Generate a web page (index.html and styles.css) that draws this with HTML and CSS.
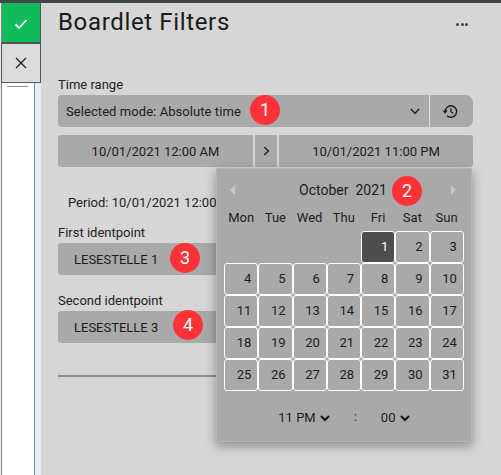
FILE: index.html
```html
<!DOCTYPE html>
<html>
<head>
  <title>Boardlet Filters</title>
  <link rel="stylesheet" href="styles.css">
</head>
<body>
  <div class="app">
    <div class="sidebar">
      <div class="sidebar-list">
        <div class="sidebar-line"></div>
      </div>
    </div>

    <div class="actions">
      <button class="action action-ok">
        <svg width="14" height="12" viewBox="0 0 14 12"><path d="M1.5 6.5 L5 10 L12.5 2" fill="none" stroke="#fff" stroke-width="1.8"/></svg>
      </button>
      <button class="action action-cancel">
        <svg width="12" height="12" viewBox="0 0 12 12"><path d="M1 1 L11 11 M11 1 L1 11" fill="none" stroke="#222" stroke-width="1.3"/></svg>
      </button>
    </div>

    <div class="panel">
      <div class="panel-head">
        <h1>Boardlet Filters</h1>
        <div class="more"><span></span><span></span><span></span></div>
      </div>

      <label class="field-label">Time range</label>
      <div class="mode-row">
        <div class="mode-select">
          <span class="mode-text">Selected mode: Absolute time</span>
          <svg width="10" height="7" viewBox="0 0 10 7"><path d="M0.8 1 L5 5.2 L9.2 1" fill="none" stroke="#222" stroke-width="1.4"/></svg>
        </div>
        <div class="mode-history">
          <svg width="16" height="15" viewBox="0 0 18 16"><path d="M3.6 8 A6.4 6.4 0 1 1 5.6 12.7" fill="none" stroke="#1c1c1c" stroke-width="1.6"/><path d="M0.6 7 L6.4 7 L3.5 10.4 Z" fill="#1c1c1c"/><path d="M10 4.4 L10 8.3 L12.8 10" fill="none" stroke="#1c1c1c" stroke-width="1.4"/></svg>
        </div>
      </div>

      <div class="date-row">
        <div class="date-btn date-from">10/01/2021 12:00 AM</div>
        <div class="date-next">
          <svg width="7" height="10" viewBox="0 0 7 10"><path d="M1.3 1 L5.3 5 L1.3 9" fill="none" stroke="#222" stroke-width="1.5"/></svg>
        </div>
        <div class="date-btn date-to">10/01/2021 11:00 PM</div>
      </div>

      <div class="period">Period: 10/01/2021 12:00 AM</div>

      <label class="field-label">First identpoint</label>
      <div class="ident-select">LESESTELLE 1</div>

      <label class="field-label second">Second identpoint</label>
      <div class="ident-select">LESESTELLE 3</div>

      <div class="rule"></div>
    </div>

    <div class="calendar">
      <div class="cal-head">
        <span class="cal-arrow cal-prev"></span>
        <span class="cal-title">October&nbsp; 2021</span>
        <span class="cal-arrow cal-next"></span>
      </div>
      <div class="cal-grid">
        <div class="cal-day">Mon</div>
        <div class="cal-day">Tue</div>
        <div class="cal-day">Wed</div>
        <div class="cal-day">Thu</div>
        <div class="cal-day">Fri</div>
        <div class="cal-day">Sat</div>
        <div class="cal-day">Sun</div>
        <div class="cal-blank"></div>
        <div class="cal-blank"></div>
        <div class="cal-blank"></div>
        <div class="cal-blank"></div>
        <div class="cal-cell cal-active">1</div>
        <div class="cal-cell">2</div>
        <div class="cal-cell">3</div>
        <div class="cal-cell">4</div>
        <div class="cal-cell">5</div>
        <div class="cal-cell">6</div>
        <div class="cal-cell">7</div>
        <div class="cal-cell">8</div>
        <div class="cal-cell">9</div>
        <div class="cal-cell">10</div>
        <div class="cal-cell">11</div>
        <div class="cal-cell">12</div>
        <div class="cal-cell">13</div>
        <div class="cal-cell">14</div>
        <div class="cal-cell">15</div>
        <div class="cal-cell">16</div>
        <div class="cal-cell">17</div>
        <div class="cal-cell">18</div>
        <div class="cal-cell">19</div>
        <div class="cal-cell">20</div>
        <div class="cal-cell">21</div>
        <div class="cal-cell">22</div>
        <div class="cal-cell">23</div>
        <div class="cal-cell">24</div>
        <div class="cal-cell">25</div>
        <div class="cal-cell">26</div>
        <div class="cal-cell">27</div>
        <div class="cal-cell">28</div>
        <div class="cal-cell">29</div>
        <div class="cal-cell">30</div>
        <div class="cal-cell">31</div>
      </div>
      <div class="cal-time">
        <span class="cal-time-part">11 PM
          <svg width="10" height="7" viewBox="0 0 10 7"><path d="M1 1 L5 5 L9 1" fill="none" stroke="#111" stroke-width="2"/></svg>
        </span>
        <span class="cal-colon">:</span>
        <span class="cal-time-part">00
          <svg width="10" height="7" viewBox="0 0 10 7"><path d="M1 1 L5 5 L9 1" fill="none" stroke="#111" stroke-width="2"/></svg>
        </span>
      </div>
    </div>

    <div class="badge badge-1">1</div>
    <div class="badge badge-2">2</div>
    <div class="badge badge-3">3</div>
    <div class="badge badge-4">4</div>
  </div>
</body>
</html>
```

FILE: styles.css
```css
html, body {
  margin: 0;
  padding: 0;
  height: 100%;
  overflow: hidden;
}

body {
  font-family: Roboto, sans-serif;
  font-size: 13px;
  color: #1c1c1c;
  background-color: #d6d6d6;
}

.app {
  position: relative;
  display: flex;
  height: 475px;
  box-sizing: border-box;
  border-top: 3px solid #444;
}

.sidebar {
  width: 41px;
  flex-shrink: 0;
  padding-left: 1px;
  box-sizing: border-box;
  background-color: #ededed;
}

.sidebar-list {
  width: 34px;
  height: 100%;
  box-sizing: border-box;
  background-color: #fff;
  border-left: 1px solid #808080;
  border-right: 1px solid #3fa3b5;
  padding-top: 83px;
}

.sidebar-line {
  width: 21px;
  height: 1px;
  margin-left: 5px;
  background-color: #8a8a8a;
}

.actions {
  position: absolute;
  left: 1px;
  top: 0;
  width: 40px;
}

.action {
  display: flex;
  align-items: center;
  justify-content: center;
  width: 40px;
  height: 40px;
  padding: 0;
  box-sizing: border-box;
  border: 1px solid #555;
}

.action-ok {
  padding-top: 2px;
  background-color: #10bb5c;
  border-color: #10bb5c #555 #555 #888;
}

.action-cancel {
  background-color: #dcdcdc;
}

.panel {
  flex: 1;
  padding: 0 28px 0 17px;
  background-color: #d6d6d6;
}

.panel-head {
  display: flex;
  align-items: center;
  justify-content: space-between;
  height: 38px;
  margin-bottom: 36px;
}

h1 {
  margin: 0;
  font-size: 24px;
  font-weight: 400;
  letter-spacing: 0.65px;
  color: #1a1a1a;
}

.more {
  display: flex;
  gap: 1.5px;
  margin: 4px 5px 0 0;
}

.more span {
  width: 3px;
  height: 3px;
  border-radius: 50%;
  background-color: #444;
}

.field-label {
  display: block;
  height: 16px;
  line-height: 16px;
  margin-bottom: 2px;
  color: #222;
}

.field-label.second {
  margin-top: 18px;
}

.mode-row {
  display: flex;
  height: 32px;
  margin-bottom: 8px;
}

.mode-select {
  flex: 1;
  display: flex;
  align-items: center;
  justify-content: space-between;
  padding: 0 9px 0 8px;
  background-color: #a9a9a9;
  border-radius: 4px 0 0 4px;
  border-right: 1px solid #e0e0e0;
}

.mode-text {
  letter-spacing: 0.07px;
}

.mode-history {
  display: flex;
  align-items: center;
  justify-content: center;
  width: 43px;
  padding-right: 3px;
  box-sizing: border-box;
  background-color: #a9a9a9;
  border-radius: 0 7px 7px 0;
}

.date-row {
  display: flex;
  gap: 2px;
  height: 32px;
  margin-bottom: 28px;
}

.date-btn {
  display: flex;
  align-items: center;
  justify-content: center;
  background-color: #a9a9a9;
}

.date-from {
  width: 195px;
  border-radius: 3px 0 0 3px;
}

.date-next {
  display: flex;
  align-items: center;
  justify-content: center;
  width: 22px;
  background-color: #a9a9a9;
}

.date-to {
  flex: 1;
  border-radius: 0 3px 3px 0;
}

.period {
  height: 16px;
  line-height: 16px;
  padding-left: 10px;
  margin-bottom: 14px;
  color: #222;
}

.ident-select {
  display: flex;
  align-items: center;
  height: 32px;
  margin-right: 10px;
  padding-left: 16px;
  background-color: #a9a9a9;
  border-radius: 3px;
}

.rule {
  height: 2px;
  margin: 32px 10px 0 0;
  background-color: #8f8f8f;
}

.calendar {
  position: absolute;
  left: 216px;
  top: 165px;
  width: 256px;
  height: 274px;
  box-sizing: border-box;
  padding: 0 8px;
  background-color: #a9a9a9;
  box-shadow: inset 0 0 0 1px #b4b4b4, 0 4px 10px rgba(0, 0, 0, 0.35);
}

.cal-head {
  display: flex;
  align-items: center;
  justify-content: space-between;
  height: 43px;
  padding: 0 8px 0 6px;
}

.cal-title {
  font-size: 14px;
}

.cal-arrow {
  width: 0;
  height: 0;
  border-top: 5px solid transparent;
  border-bottom: 5px solid transparent;
}

.cal-prev {
  border-right: 5px solid #c9c9c9;
}

.cal-next {
  border-left: 5px solid #c9c9c9;
}

.cal-grid {
  display: grid;
  grid-template-columns: repeat(7, 34.25px);
  grid-template-rows: 20px repeat(5, 32px);
}

.cal-day {
  text-align: center;
  line-height: 14px;
}

.cal-cell {
  box-sizing: border-box;
  border: 1px solid #fff;
  border-radius: 3px;
  padding-right: 6px;
  text-align: right;
  line-height: 30px;
}

.cal-active {
  background-color: #4d4d4d;
  color: #fff;
}

.cal-time {
  display: flex;
  justify-content: center;
  align-items: center;
  gap: 24px;
  height: 16px;
  margin-top: 18px;
}

.cal-time-part svg {
  margin-left: 1px;
}

.cal-colon {
  font-size: 12px;
}

.badge {
  position: absolute;
  width: 30px;
  height: 30px;
  border-radius: 50%;
  background-color: #ff3237;
  color: #fff;
  font-size: 18px;
  line-height: 30px;
  text-align: center;
}

.badge-1 {
  left: 250px;
  top: 92px;
}

.badge-2 {
  left: 392px;
  top: 173px;
}

.badge-3 {
  left: 170px;
  top: 240px;
}

.badge-4 {
  left: 173px;
  top: 307px;
}
```
